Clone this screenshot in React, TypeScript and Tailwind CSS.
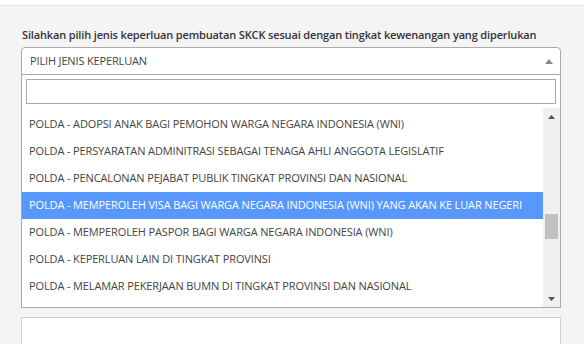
import React from "react";

const options = [
  "POLDA - ADOPSI ANAK BAGI PEMOHON WARGA NEGARA INDONESIA (WNI)",
  "POLDA - PERSYARATAN ADMINITRASI SEBAGAI TENAGA AHLI ANGGOTA LEGISLATIF",
  "POLDA - PENCALONAN PEJABAT PUBLIK TINGKAT PROVINSI DAN NASIONAL",
  "POLDA - MEMPEROLEH VISA BAGI WARGA NEGARA INDONESIA (WNI) YANG AKAN KE LUAR NEGERI",
  "POLDA - MEMPEROLEH PASPOR BAGI WARGA NEGARA INDONESIA (WNI)",
  "POLDA - KEPERLUAN LAIN DI TINGKAT PROVINSI",
  "POLDA - MELAMAR PEKERJAAN BUMN DI TINGKAT PROVINSI DAN NASIONAL",
];

export default function App() {
  return (
    <div
      className="w-[584px] h-[344px] overflow-hidden bg-[#f4f4f4] text-[#444]"
      style={{ fontFamily: '"Open Sans", "Noto Sans", sans-serif' }}
    >
      <div className="h-[6px] bg-white border-b border-[#e3e3e3]" />
      <div className="pl-[21px] pr-[23px] pt-[21px]">
        <div className="text-[11px] font-semibold text-[#333] leading-[16px] pl-[1px] mb-[4px] tracking-[-0.15px] whitespace-nowrap">
          Silahkan pilih jenis keperluan pembuatan SKCK sesuai dengan tingkat kewenangan yang diperlukan
        </div>
        <div className="relative h-[270px]">
          <div className="h-[28px] bg-white border border-[#aaa] rounded-t-[4px] flex items-center justify-between pl-[8px] pr-[7px]">
            <span className="text-[11px] tracking-[-0.15px] text-[#444]">PILIH JENIS KEPERLUAN</span>
            <svg width="8" height="5" viewBox="0 0 8 5">
              <path d="M0 5 L4 0 L8 5 Z" fill="#888" />
            </svg>
          </div>
          <div className="absolute left-0 right-0 top-[27px] z-10 bg-white border border-[#aaa] h-[234px] flex flex-col">
            <div className="p-[4px]">
              <div className="h-[25px] border border-[#aaa] bg-white" />
            </div>
            <div className="flex flex-1 min-h-0">
              <div className="flex-1 overflow-hidden pt-[3px]">
                {options.map((o, i) => (
                  <div
                    key={o}
                    className={
                      "h-[27px] flex items-center pl-[7px] text-[11px] tracking-[-0.13px] whitespace-nowrap " +
                      (i === 3 ? "bg-[#5897fb] text-white" : "text-[#444]")
                    }
                  >
                    {o}
                  </div>
                ))}
              </div>
              <div className="w-[17px] bg-[#f0f0f0] flex flex-col items-center">
                <div className="h-[17px] flex items-center justify-center">
                  <svg width="7" height="4" viewBox="0 0 7 4">
                    <path d="M0 4 L3.5 0 L7 4 Z" fill="#505050" />
                  </svg>
                </div>
                <div className="flex-1 w-full relative">
                  <div className="absolute left-[2px] right-[2px] top-[89px] h-[25px] bg-[#c1c1c1]" />
                </div>
                <div className="h-[17px] flex items-center justify-center">
                  <svg width="7" height="4" viewBox="0 0 7 4">
                    <path d="M0 0 L7 0 L3.5 4 Z" fill="#505050" />
                  </svg>
                </div>
              </div>
            </div>
          </div>
          <div className="absolute left-0 right-0 top-[270px] h-[60px] bg-white border border-[#d0d0d0]" />
        </div>
      </div>
    </div>
  );
}
